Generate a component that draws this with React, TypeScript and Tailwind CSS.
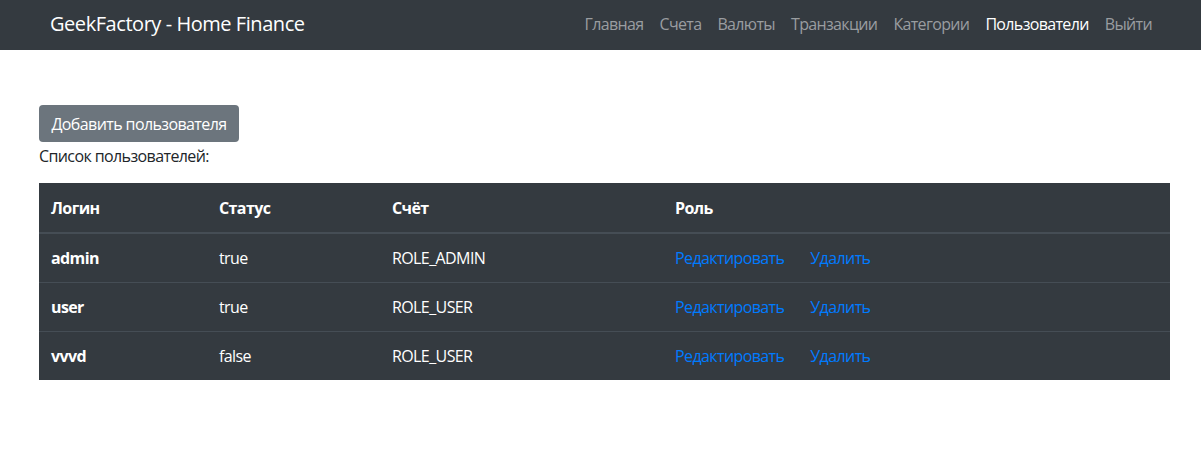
const navLinks = ["Главная", "Счета", "Валюты", "Транзакции", "Категории", "Пользователи", "Выйти"];

const users = [
  { login: "admin", status: "true", role: "ROLE_ADMIN" },
  { login: "user", status: "true", role: "ROLE_USER" },
  { login: "vvvd", status: "false", role: "ROLE_USER" },
];

export default function App() {
  return (
    <div className="min-h-[467px] bg-white text-[16px] text-[#212529]" style={{ fontFamily: '"Open Sans", "Noto Sans", sans-serif' }}>
      {/* Navbar */}
      <nav className="flex h-[50px] items-center justify-between bg-[#343a40] pb-[3px] pl-[50px] pr-[49px]">
        <a className="text-[20px] tracking-[-0.45px] text-white">GeekFactory - Home Finance</a>
        <ul className="flex items-center gap-[16px] tracking-[-0.65px]">
          {navLinks.map((l) => (
            <li key={l} className={l === "Пользователи" ? "text-white" : "text-[#9a9da0]"}>
              {l}
            </li>
          ))}
        </ul>
      </nav>

      <div className="px-[39px] pt-[55px] tracking-[-0.6px]">
        <button className="h-[37px] w-[200px] rounded-[4px] bg-[#6c757d] text-[16px] text-white">
          Добавить пользователя
        </button>
        <p className="mt-[2px] leading-[24px]">Список пользователей:</p>

        <table className="mt-[15px] w-[1131px] table-fixed border-collapse bg-[#343a40] text-white">
          <colgroup>
            <col className="w-[168px]" />
            <col className="w-[173px]" />
            <col className="w-[283px]" />
            <col />
          </colgroup>
          <thead>
            <tr className="h-[50px] border-b-2 border-[#454d55] text-left">
              <th className="px-[12px] font-bold">Логин</th>
              <th className="px-[12px] font-bold">Статус</th>
              <th className="px-[12px] font-bold">Счёт</th>
              <th className="px-[12px] font-bold">Роль</th>
            </tr>
          </thead>
          <tbody>
            {users.map((u, i) => (
              <tr key={u.login} className={`h-[49px] ${i > 0 ? "border-t border-[#454d55]" : ""}`}>
                <td className="px-[12px] font-bold">{u.login}</td>
                <td className="px-[12px]">{u.status}</td>
                <td className="px-[12px]">{u.role}</td>
                <td className="px-[12px] text-[#007bff]">
                  <a className="mr-[26px]">Редактировать</a>
                  <a>Удалить</a>
                </td>
              </tr>
            ))}
          </tbody>
        </table>
      </div>
    </div>
  );
}
